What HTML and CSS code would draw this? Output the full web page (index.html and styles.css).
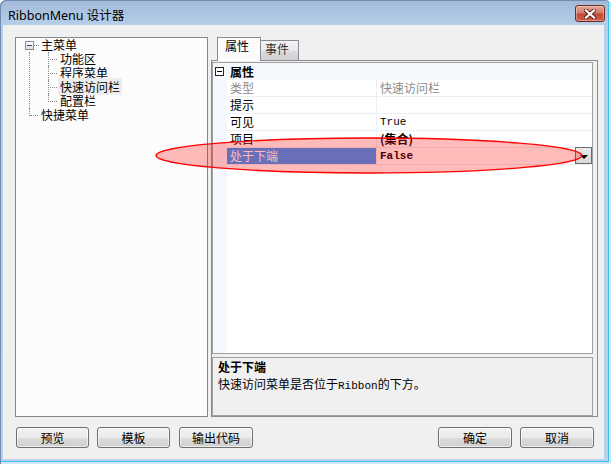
FILE: index.html
```html
<!DOCTYPE html>
<html lang="zh">
<head>
    <meta charset="UTF-8">
    <title>RibbonMenu 设计器</title>
    <link rel="stylesheet" href="styles.css">
</head>
<body>
    <div class="window">
        <div class="titlebar">
            <span class="title">RibbonMenu 设计器</span>
            <div class="close-btn">
                <svg width="12" height="10" viewBox="0 0 12 10">
                    <path d="M2 1.5 L10 8.5 M10 1.5 L2 8.5" stroke="#5b1f16" stroke-width="4" stroke-linecap="square"/>
                    <path d="M2 1.5 L10 8.5 M10 1.5 L2 8.5" stroke="#fff" stroke-width="2.2" stroke-linecap="square"/>
                </svg>
            </div>
        </div>

        <div class="client">
            <div class="main">
                <!-- menu tree -->
                <div class="tree">
                    <div class="node root">
                        <span class="expander"></span>
                        <span class="label">主菜单</span>
                    </div>
                    <div class="group">
                        <div class="node child"><span class="label">功能区</span></div>
                        <div class="node child"><span class="label">程序菜单</span></div>
                        <div class="node child"><span class="label hover">快速访问栏</span></div>
                        <div class="node child last"><span class="label">配置栏</span></div>
                    </div>
                    <div class="node sibling"><span class="label">快捷菜单</span></div>
                </div>

                <!-- property tabs -->
                <div class="tabctl">
                    <div class="tabstrip">
                        <div class="tab active">属性</div>
                        <div class="tab">事件</div>
                    </div>
                    <div class="tabpage">
                        <div class="grid">
                            <div class="cat-row">
                                <span class="collapse"></span>
                                <span class="cat-name">属性</span>
                            </div>
                            <div class="row readonly">
                                <div class="margin"></div>
                                <div class="name">类型</div>
                                <div class="value">快速访问栏</div>
                            </div>
                            <div class="row">
                                <div class="margin"></div>
                                <div class="name">提示</div>
                                <div class="value"></div>
                            </div>
                            <div class="row">
                                <div class="margin"></div>
                                <div class="name">可见</div>
                                <div class="value mono">True</div>
                            </div>
                            <div class="row">
                                <div class="margin"></div>
                                <div class="name">项目</div>
                                <div class="value bold">(集合)</div>
                            </div>
                            <div class="row selected">
                                <div class="margin"></div>
                                <div class="name">处于下端</div>
                                <div class="value">
                                    <span class="mono bold">False</span>
                                    <span class="drop-btn"></span>
                                </div>
                            </div>
                        </div>
                        <div class="help">
                            <div class="help-title">处于下端</div>
                            <div class="help-text">快速访问菜单是否位于<span class="mono">Ribbon</span>的下方。</div>
                        </div>
                    </div>
                </div>
            </div>

            <div class="buttons">
                <div class="btn-group">
                    <button class="btn">预览</button>
                    <button class="btn">模板</button>
                    <button class="btn wide">输出代码</button>
                </div>
                <div class="btn-group right">
                    <button class="btn">确定</button>
                    <button class="btn">取消</button>
                </div>
            </div>
        </div>

        <!-- red highlight drawn over the screenshot -->
        <svg class="annotation" width="611" height="464" viewBox="0 0 611 464">
            <ellipse cx="369" cy="155.5" rx="213" ry="17.5" fill="rgba(255,0,0,0.27)" stroke="#ff0000" stroke-width="1.3"/>
        </svg>
    </div>
</body>
</html>
```

FILE: styles.css
```css
* {
    margin: 0;
    padding: 0;
    box-sizing: border-box;
}

html, body {
    width: 611px;
    height: 464px;
    overflow: hidden;
    background-color: #fff;
    font-family: "Noto Sans CJK SC", sans-serif;
    font-size: 12px;
    color: #000;
}

.window {
    position: relative;
    width: 611px;
    height: 464px;
    display: flex;
    flex-direction: column;
    padding: 0 7px 5px 3px;
    border-top-left-radius: 6px;
    border-top-right-radius: 6px;
    background: linear-gradient(#a2bad7, #b6cee9 25px, #b9d1ea);
    box-shadow: inset 1px 1px 0 #6f8db2, inset -2px -2px 0 #d2e6f5, inset -3px -3px 0 #3cbfec;
}

/* title bar */
.titlebar {
    height: 25px;
    flex-shrink: 0;
    display: flex;
    justify-content: space-between;
    align-items: flex-start;
    padding-left: 5px;
    margin-right: -1px;
}

.title {
    font-family: "Noto Sans", "Noto Sans CJK SC", sans-serif;
    font-size: 12.5px;
    line-height: 16px;
    margin-top: 8px;
    color: #000;
}

.close-btn {
    width: 30px;
    height: 17px;
    margin-top: 5px;
    border: 1px solid #6e2a20;
    border-radius: 3px;
    background: linear-gradient(#e3a596, #d47a68 45%, #c24a33 55%, #c9604a);
    box-shadow: inset 0 0 0 1px rgba(255,255,255,0.35);
    display: flex;
    justify-content: center;
    align-items: center;
}

/* client area */
.client {
    flex: 1;
    background-color: #f0f0f0;
    display: flex;
    flex-direction: column;
    padding: 12px 0 0 12px;
}

.main {
    display: flex;
    height: 380px;
}

/* tree */
.tree {
    width: 193px;
    height: 380px;
    border: 1px solid #828790;
    background-color: #fcfcfc;
}

.node {
    position: relative;
    height: 14px;
    line-height: 14px;
    white-space: nowrap;
}

.label {
    padding: 0 2px;
}

.label.hover {
    background-color: #ededed;
}

.node.root {
    padding-left: 23px;
}

.expander {
    position: absolute;
    left: 9px;
    top: 3px;
    width: 9px;
    height: 9px;
    border: 1px solid #8f8f8f;
    background: linear-gradient(#fff, #dcdcdc);
}

.expander::before {
    content: "";
    position: absolute;
    left: 1px;
    top: 3px;
    width: 5px;
    height: 1px;
    background-color: #2b4a8a;
}

.expander::after {
    content: "";
    position: absolute;
    left: 8px;
    top: 3px;
    width: 5px;
    border-top: 1px dotted #8a8a8a;
}

.group {
    margin-left: 13px;
    border-left: 1px dotted #8a8a8a;
}

.node.child {
    padding-left: 28px;
}

.node.child::before {
    content: "";
    position: absolute;
    left: 18px;
    top: 0;
    height: 14px;
    border-left: 1px dotted #8a8a8a;
}

.node.child.last::before {
    height: 8px;
}

.node.child::after,
.node.sibling::after {
    content: "";
    position: absolute;
    left: 18px;
    top: 7px;
    width: 9px;
    border-top: 1px dotted #8a8a8a;
}

.node.sibling {
    padding-left: 23px;
}

.node.sibling::before {
    content: "";
    position: absolute;
    left: 13px;
    top: 0;
    height: 8px;
    border-left: 1px dotted #8a8a8a;
}

.node.sibling::after {
    left: 14px;
    width: 8px;
}

/* tabs */
.tabctl {
    margin-left: 3px;
    width: 387px;
    display: flex;
    flex-direction: column;
}

.tabstrip {
    height: 24px;
    display: flex;
    align-items: flex-end;
    padding-left: 6px;
    position: relative;
    z-index: 1;
}

.tab {
    height: 20px;
    width: 39px;
    padding-left: 4px;
    line-height: 16px;
    border: 1px solid #898c95;
    border-bottom: none;
    background: linear-gradient(#f2f2f2, #ebebeb 50%, #dddddd 50%, #cfcfcf);
    color: #333;
}

.tab.active {
    height: 24px;
    width: 44px;
    padding-left: 7px;
    margin-bottom: -1px;
    margin-right: -1px;
    background: #fcfcfc;
    color: #000;
}

.tabpage {
    height: 357px;
    border: 1px solid #898c95;
    background-color: #f0f0f0;
    padding: 1px 4px 0 0;
}

/* property grid */
.grid {
    height: 292px;
    border: 1px solid #a0a0a0;
    background: linear-gradient(to right, #f4f7fc 14px, #fff 14px);
}

.cat-row {
    height: 17px;
    display: flex;
    align-items: center;
    background-color: #f4f7fc;
}

.collapse {
    position: relative;
    width: 9px;
    height: 9px;
    margin-left: 2px;
    border: 1px solid #222;
    background-color: #fff;
}

.collapse::after {
    content: "";
    position: absolute;
    left: 1px;
    top: 3px;
    width: 5px;
    height: 1px;
    background-color: #000;
}

.cat-name {
    font-weight: bold;
    margin-left: 6px;
    line-height: 17px;
}

.row {
    display: grid;
    grid-template-columns: 14px 150px 1fr;
    height: 17px;
    line-height: 16px;
}

.row .name,
.row .value {
    border-bottom: 1px solid #ebeef3;
    padding-left: 3px;
    white-space: nowrap;
}

.row .name {
    border-right: 1px solid #ebeef3;
}

.row.readonly .name,
.row.readonly .value {
    color: #8d8d8d;
}

.row.selected .name {
    background-color: #3399ff;
    color: #fff;
}

.row .value {
    display: flex;
    justify-content: space-between;
    align-items: flex-start;
}

.mono {
    font-family: "Liberation Mono", monospace;
    font-size: 11px;
}

.bold {
    font-weight: bold;
}

.drop-btn {
    width: 17px;
    height: 17px;
    margin-top: -1px;
    border: 1px solid #6b6b6b;
    background: linear-gradient(#ececec, #d8d8d8);
    display: flex;
    justify-content: center;
    align-items: center;
}

.drop-btn::after {
    content: "";
    border-left: 4px solid transparent;
    border-right: 4px solid transparent;
    border-top: 4px solid #000;
    margin-top: 2px;
}

/* description box */
.help {
    height: 59px;
    margin-top: 3px;
    border: 1px solid #a0a0a0;
    background-color: #f0f0f0;
    padding: 1px 5px;
}

.help-title {
    font-weight: bold;
    line-height: 15px;
}

.help-text {
    margin-top: 2px;
    line-height: 16px;
}

/* bottom buttons */
.buttons {
    display: flex;
    justify-content: space-between;
    margin-top: 10px;
    padding-left: 1px;
    padding-right: 10px;
}

.btn-group {
    display: flex;
    gap: 8px;
}

.btn-group .wide {
    margin-left: 1px;
    width: 74px;
}

.btn-group.right .btn {
    width: 74px;
}

.btn {
    width: 73px;
    height: 21px;
    border: 1px solid #707070;
    border-radius: 3px;
    background: linear-gradient(#f2f2f2, #ebebeb 50%, #dddddd 50%, #cfcfcf);
    box-shadow: inset 0 0 0 1px rgba(255,255,255,0.6);
    font-family: "Noto Sans CJK SC", sans-serif;
    font-size: 12px;
    line-height: 18px;
    color: #000;
}

.annotation {
    position: absolute;
    left: 0;
    top: 0;
    pointer-events: none;
}
```
